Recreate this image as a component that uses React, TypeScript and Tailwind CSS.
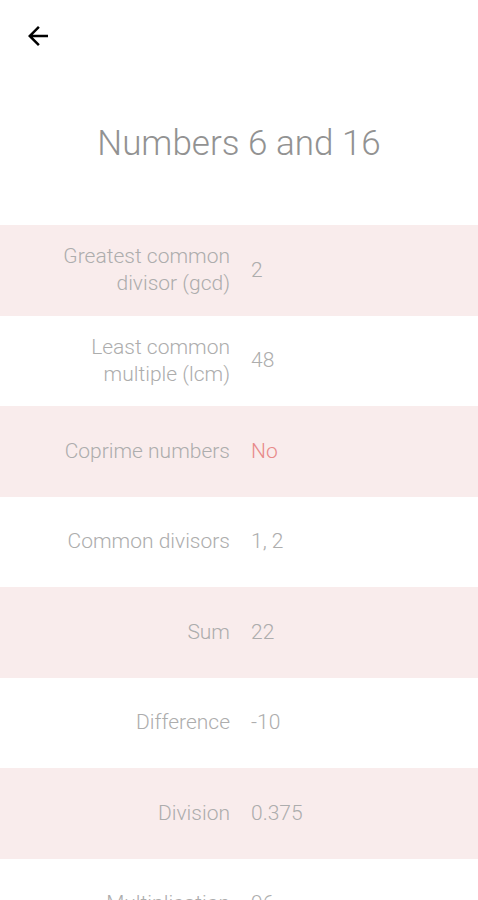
import React from "react";

type Row = { label: string; value: string; highlight?: boolean };

const rows: Row[] = [
  { label: "Greatest common divisor (gcd)", value: "2" },
  { label: "Least common multiple (lcm)", value: "48" },
  { label: "Coprime numbers", value: "No", highlight: true },
  { label: "Common divisors", value: "1, 2" },
  { label: "Sum", value: "22" },
  { label: "Difference", value: "-10" },
  { label: "Division", value: "0.375" },
  { label: "Multiplication", value: "96" },
];

function BackArrow() {
  return (
    <svg width="30" height="30" viewBox="0 0 24 24" className="text-black">
      <path
        d="M20 11H7.83l5.59-5.59L12 4l-8 8 8 8 1.41-1.41L7.83 13H20v-2z"
        fill="currentColor"
      />
    </svg>
  );
}

export default function App() {
  return (
    <div
      className="w-[478px] h-[900px] overflow-hidden bg-white"
      style={{ fontFamily: "'Roboto Light', Roboto, 'Noto Sans', sans-serif" }}
    >
      {/* Toolbar */}
      <div className="h-[72px] flex items-center pl-[23px] pb-[1px]">
        <BackArrow />
      </div>

      {/* Title */}
      <div className="h-[153px] flex justify-center pt-[50px]">
        <h1 className="text-[35px] font-light text-[#929292] leading-[44px]">
          Numbers 6 and 16
        </h1>
      </div>

      {/* Results */}
      <div className="flex flex-col">
        {rows.map((row, i) => (
          <div
            key={row.label}
            className={
              i % 2 === 0
                ? "h-[90.5px] shrink-0 flex items-center bg-[#f9ecec]"
                : "h-[90.5px] shrink-0 flex items-center bg-white"
            }
          >
            <div className="w-[230px] shrink-0 pl-[44px] text-right text-[21px] font-light leading-[27px] text-[#adadad]">
              {row.label}
            </div>
            <div
              className={
                row.highlight
                  ? "pl-[21px] text-[21px] font-light leading-[27px] text-[#e88a8a]"
                  : "pl-[21px] text-[21px] font-light leading-[27px] text-[#adadad]"
              }
            >
              {row.value}
            </div>
          </div>
        ))}
      </div>
    </div>
  );
}
